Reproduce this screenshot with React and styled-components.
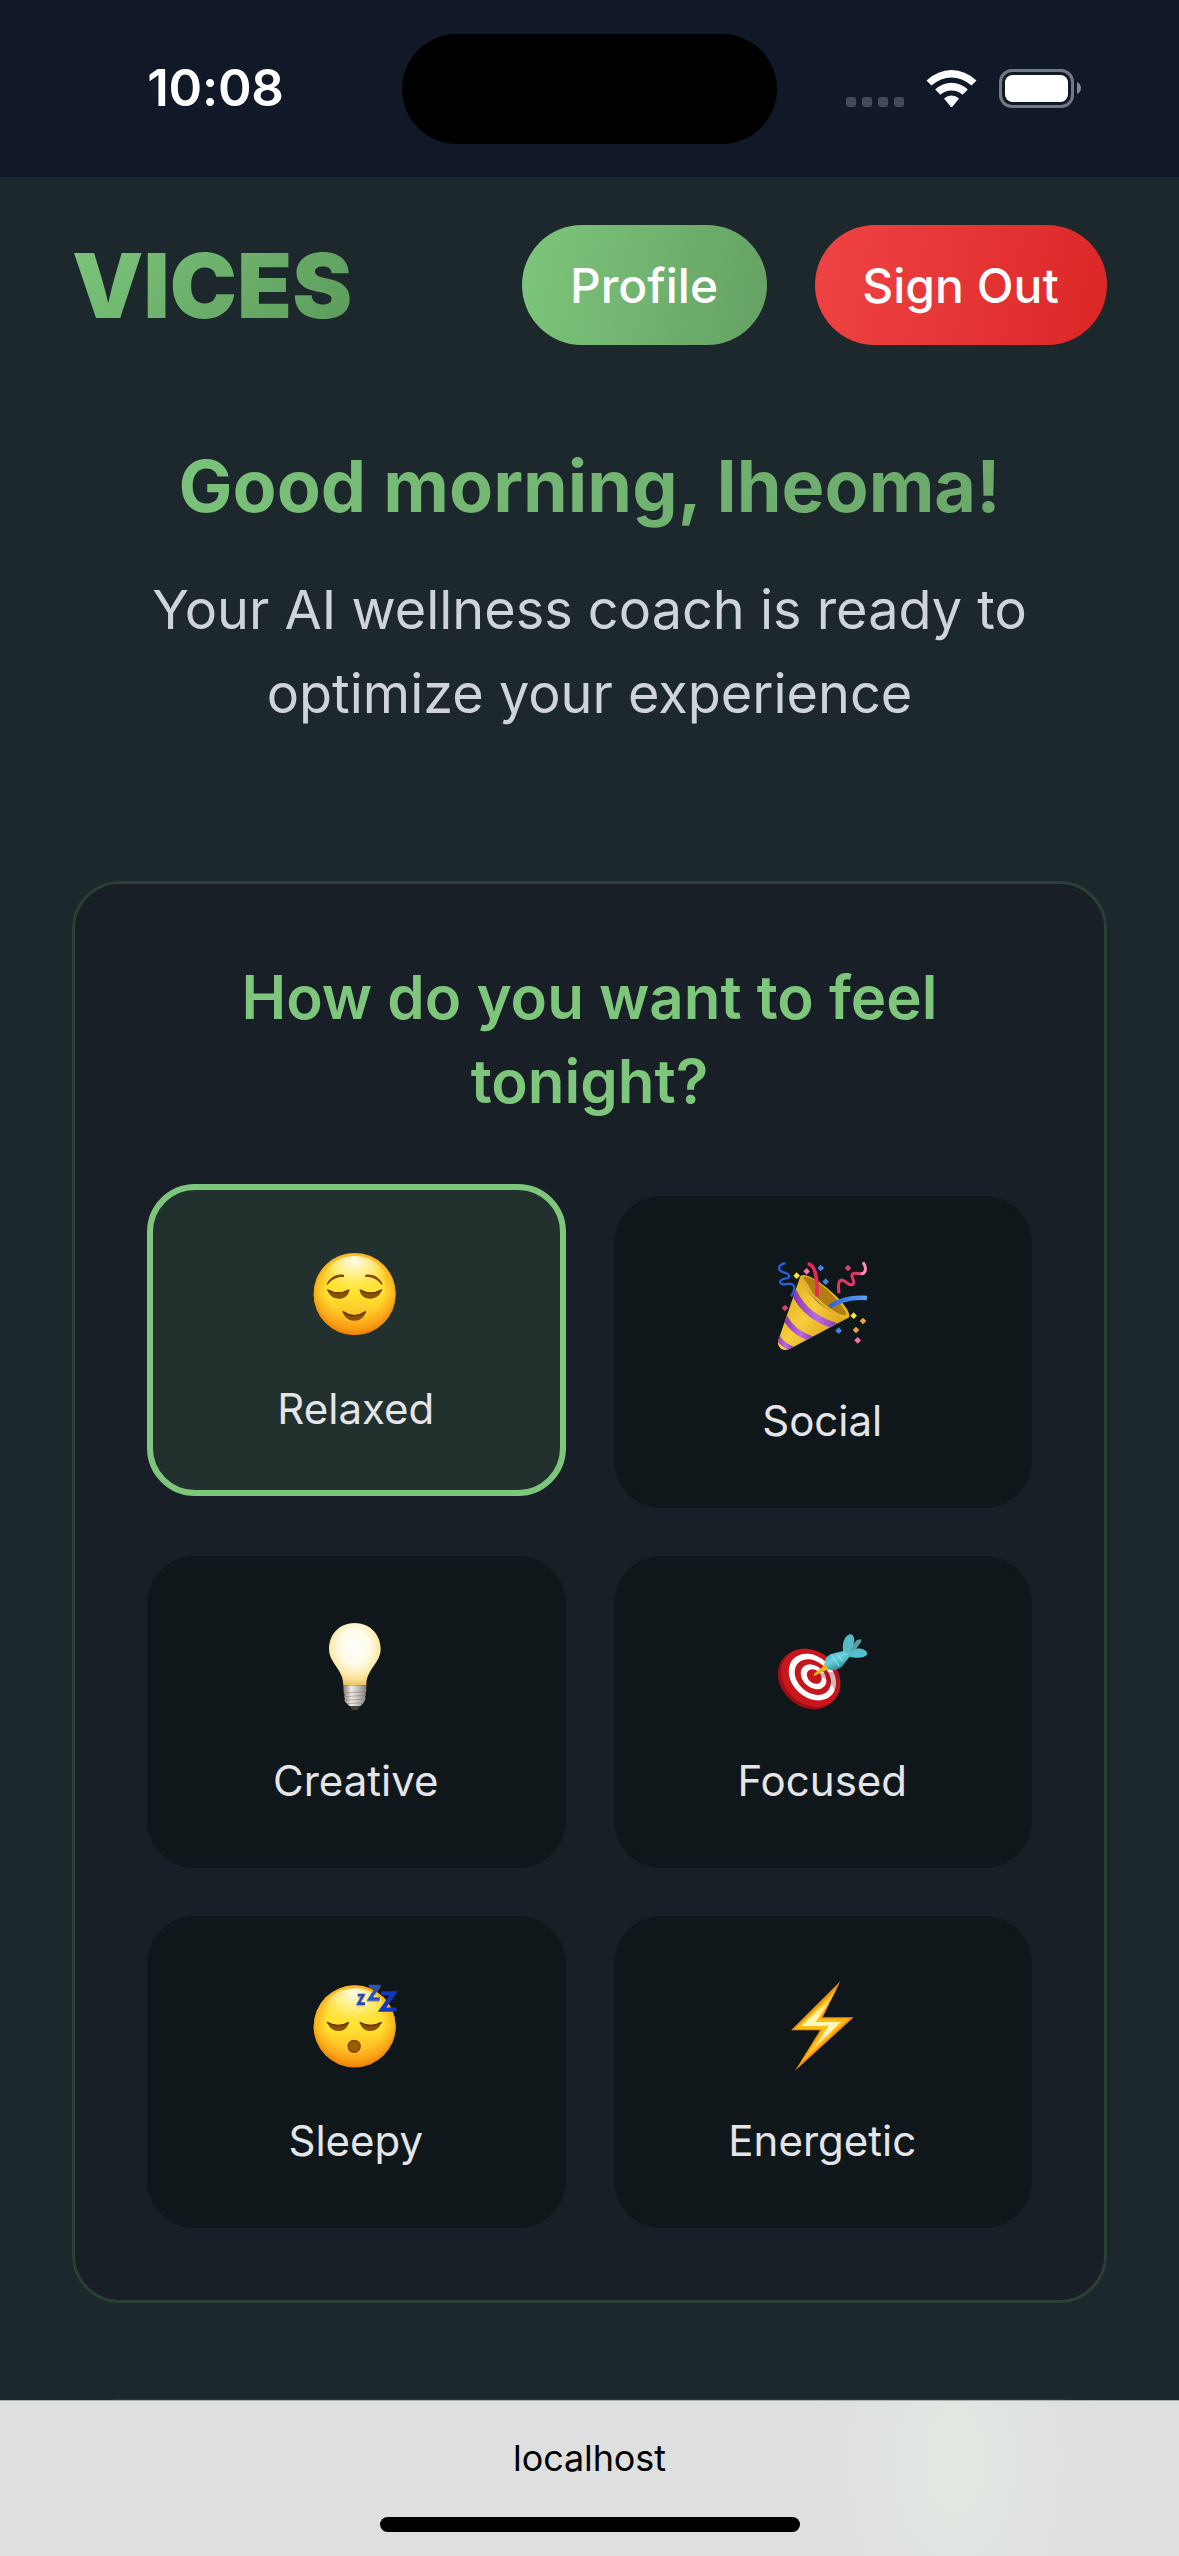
import React from "react";
import styled, { createGlobalStyle } from "styled-components";

const GlobalStyle = createGlobalStyle`
  *, *::before, *::after { box-sizing: border-box; }
  body { margin: 0; background: #1d282d; }
  h1, h2, p { margin: 0; }
  button { font: inherit; border: 0; }
`;

const Screen = styled.div`
  width: 1179px;
  height: 2556px;
  display: flex;
  flex-direction: column;
  overflow: hidden;
  background: #1d282d;
  font-family: Inter, "Liberation Sans", sans-serif;
`;

const StatusBar = styled.header`
  flex: none;
  height: 177px;
  display: grid;
  grid-template-columns: 402px 375px 402px;
  align-items: center;
  background: #111827;
`;

const Clock = styled.time`
  padding: 0 0 1px 29px;
  text-align: center;
  color: #fff;
  font-size: 51px;
  font-weight: 600;
  line-height: 60px;
  letter-spacing: -0.3px;
`;

const Island = styled.div`
  height: 110px;
  border-radius: 55px;
  background: #000;
`;

const StatusIcons = styled.svg`
  display: block;
  width: 240px;
  height: 42px;
  margin-left: 67px;
`;

const Main = styled.main`
  flex: 1;
  min-height: 0;
  overflow: hidden;
  display: flex;
  flex-direction: column;
  padding: 48px 72px 0;
`;

const TopNav = styled.nav`
  flex: none;
  display: flex;
  align-items: center;
  height: 120px;
`;

const Brand = styled.div`
  margin: 2px auto 0 0;
  font-size: 90px;
  font-weight: 900;
  line-height: 108px;
  color: transparent;
  background: linear-gradient(135deg, #7dc67c 0%, #5a9a5a 100%);
  background-clip: text;
  -webkit-background-clip: text;
`;

const NavButtons = styled.div`
  display: flex;
  gap: 48px;
`;

const PillButton = styled.button`
  width: ${(p) => p.$width}px;
  height: 120px;
  padding: 0 1px 0 0;
  border-radius: 60px;
  color: #fff;
  font-size: 48px;
  font-weight: 500;
  background: linear-gradient(100deg, ${(p) => p.$from} 0%, ${(p) => p.$to} 100%);
`;

const Hero = styled.section`
  flex: none;
  margin-top: 98px;
  text-align: center;
`;

const Greeting = styled.h1`
  font-size: 72px;
  font-weight: 700;
  line-height: 86px;
  color: transparent;
  background: linear-gradient(135deg, #7dc67c 0%, #68a468 100%);
  background-clip: text;
  -webkit-background-clip: text;
`;

const Subtitle = styled.p`
  margin-top: 39px;
  color: #d1d3dc;
  font-size: 54px;
  line-height: 84px;
`;

const Panel = styled.section`
  flex: none;
  height: ${(p) => p.$height}px;
  margin-top: ${(p) => p.$gap}px;
  padding: 71px 72px 72px;
  border: 3px solid #294034;
  border-radius: 48px;
  background: #181f26;
`;

const PanelTitle = styled.h2`
  color: #7dc67c;
  font-size: 60px;
  font-weight: 600;
  line-height: 84px;
  text-align: center;
`;

const MoodGrid = styled.div`
  margin-top: 73px;
  display: grid;
  grid-template-columns: 1fr 1fr;
  grid-auto-rows: 312px;
  gap: 48px;
`;

const MoodCard = styled.button`
  display: flex;
  flex-direction: column;
  align-items: center;
  padding: 59px 0 0;
  border: 6px solid ${(p) => (p.$selected ? "#7dc67c" : "#0f171a")};
  border-radius: 48px;
  background: ${(p) => (p.$selected ? "#22302e" : "#0f171a")};
  transform: translateY(${(p) => (p.$selected ? -12 : 0)}px);
`;

const Emoji = styled.svg`
  flex: none;
  display: block;
  width: 90px;
  height: 90px;
  overflow: visible;
`;

const MoodLabel = styled.span`
  margin-top: 39px;
  padding-right: 1px;
  color: #e5e5e9;
  font-size: 42px;
  line-height: 61px;
`;

const BrowserBar = styled.footer`
  flex: none;
  height: 156px;
  display: flex;
  flex-direction: column;
  align-items: center;
  padding-top: 35px;
  border-top: 1px solid #a9b0b0;
  background:
    radial-gradient(ellipse 150px 260px at 955px 60px, #e2e8e2 0%, #e2e8e200 100%),
    #dedfdf;
`;

const Address = styled.span`
  color: #000;
  font-size: 36px;
  line-height: 44px;
  letter-spacing: -0.1px;
`;

const HomeIndicator = styled.div`
  width: 420px;
  height: 15px;
  margin-top: 37px;
  border-radius: 8px;
  background: #000;
`;

function FaceBase({ cy, id }) {
  return (
    <>
      <defs>
        <linearGradient id={id + "-fill"} x1="0" y1="0" x2="0" y2="1">
          <stop offset="0" stopColor="#ffd53a" />
          <stop offset="0.5" stopColor="#ffe432" />
          <stop offset="1" stopColor="#ffa31c" />
        </linearGradient>
        <radialGradient id={id + "-edge"} cx="0.5" cy="0.46" r="0.54">
          <stop offset="0.62" stopColor="#f58a08" stopOpacity="0" />
          <stop offset="0.86" stopColor="#f58a08" stopOpacity="0.45" />
          <stop offset="1" stopColor="#e87a05" stopOpacity="0.9" />
        </radialGradient>
        <radialGradient id={id + "-shine"} cx="0.5" cy="0.1" r="0.62">
          <stop offset="0" stopColor="#fffdf0" stopOpacity="0.98" />
          <stop offset="0.5" stopColor="#fffbb0" stopOpacity="0.6" />
          <stop offset="1" stopColor="#fff34a" stopOpacity="0" />
        </radialGradient>
      </defs>
      <circle cx="195" cy={cy} r="123" fill={`url(#${id}-fill)`} />
      <circle cx="195" cy={cy} r="123" fill={`url(#${id}-edge)`} />
      <ellipse cx="195" cy={cy - 38} rx="96" ry="76" fill={`url(#${id}-shine)`} />
    </>
  );
}

function RelievedFace() {
  return (
    <Emoji viewBox="64 57 270 270">
      <FaceBase cy={192} id="relieved" />
      <g fill="#854705">
        <path d="M111 163 C120 142 141 130 163 135 L163 141 C142 140 127 148 114 164Z" />
        <path d="M279 163 C270 142 249 130 227 135 L227 141 C248 140 263 148 276 164Z" />
      </g>
      <g fill="#8a5203">
        <path d="M113 178 Q146 197 179 179 C177 214 120 217 113 178Z" />
        <path d="M210 179 Q243 197 277 178 C270 216 212 214 210 179Z" />
        <path d="M159 243 Q194 267 229 243 C222 282 166 282 159 243Z" />
      </g>
      <g stroke="#6f3901" strokeWidth="5" strokeLinecap="round" fill="none">
        <path d="M115 181 Q146 198 177 181" />
        <path d="M212 181 Q243 198 275 181" />
        <path d="M161 246 Q194 269 227 246" />
      </g>
    </Emoji>
  );
}

function SleepingFace() {
  return (
    <Emoji viewBox="64 63 270 270">
      <FaceBase cy={199} id="sleeping" />
      <g fill="#8a5203">
        <path d="M112 185 Q146 205 178 185 C173 222 122 222 112 185Z" />
        <path d="M210 185 Q243 205 276 185 C267 222 216 222 210 185Z" />
      </g>
      <g stroke="#6f3901" strokeWidth="5" strokeLinecap="round" fill="none">
        <path d="M114 188 Q146 206 176 188" />
        <path d="M212 188 Q243 206 274 188" />
      </g>
      <circle cx="193.500" cy="259" r="18" fill="#965f05" stroke="#7d4700" strokeWidth="4" />
      <g fill="none" strokeLinejoin="miter" strokeMiterlimit="6">
        <g stroke="#c98a18" strokeOpacity="0.55" transform="translate(0 5)">
          <path d="M205 106 H221 L206 131 H225" strokeWidth="7" />
          <path d="M238 79 H266 L240 117 H268" strokeWidth="9" />
        </g>
        <path d="M204 105 H221 L206 131 H226" stroke="#2248bd" strokeWidth="8" />
        <path d="M237 79 H265 L240 117 H270" stroke="#2453cc" strokeWidth="10" />
        <path d="M274 100 H312 L277 149 H320" stroke="#1238c0" strokeWidth="13" />
      </g>
    </Emoji>
  );
}

function PartyPopper() {
  return (
    <Emoji viewBox="83 63 270 270">
      <defs>
        <linearGradient id="cone" x1="0" y1="0" x2="1" y2="0.8">
          <stop offset="0" stopColor="#d9a010" />
          <stop offset="0.5" stopColor="#f7cd3e" />
          <stop offset="1" stopColor="#d09a0b" />
        </linearGradient>
        <linearGradient id="violet" x1="0" y1="0" x2="1" y2="0">
          <stop offset="0" stopColor="#8c37b0" />
          <stop offset="0.5" stopColor="#ba6be6" />
          <stop offset="1" stopColor="#8735a6" />
        </linearGradient>
        <linearGradient id="blueRibbon" x1="0" y1="0" x2="1" y2="0">
          <stop offset="0" stopColor="#2b63d4" />
          <stop offset="1" stopColor="#5aa2fa" />
        </linearGradient>
        <clipPath id="coneClip">
          <path d="M149 112 C166 160 230 225 294 233 L122 325 Q106 334 92 326 Q80 317 84 301Z" />
        </clipPath>
      </defs>
      <path d="M149 112 C166 160 230 225 294 233 L122 325 Q106 334 92 326 Q80 317 84 301Z" fill="url(#cone)" />
      <g clipPath="url(#coneClip)" fill="none" stroke="url(#violet)">
        <path d="M130 155 Q168 237 270 262" strokeWidth="19" />
        <path d="M104 232 Q130 283 196 300" strokeWidth="17" />
        <path d="M80 288 Q96 316 130 329" strokeWidth="16" />
      </g>
      <path d="M151 107 C169 96 216 128 258 169 C286 197 302 223 296 232 C282 246 230 213 190 173 C158 143 143 116 151 107Z" fill="#e6b328" />
      <path d="M160 111 C180 106 222 139 249 168 C277 198 291 219 287 224 C276 231 231 203 198 170 C170 142 151 118 160 111Z" fill="#b07d10" />
      <path d="M158 113 C182 139 187 166 200 181 C177 160 154 132 158 113Z" fill="#e0b02c" />
      <path d="M172 72 C194 72 202 112 200 169" fill="none" stroke="#e72957" strokeWidth="11" />
      <path d="M238 200 Q284 169 350 174" fill="none" stroke="url(#blueRibbon)" strokeWidth="13" />
      <path d="M105 69 C82 75 80 92 100 97 C118 101 123 113 108 115 C81 118 84 137 112 132 C139 128 135 151 122 169" fill="none" stroke="#265fd9" strokeWidth="7" />
      <path d="M338 67 C351 84 345 103 331 101 C315 98 299 98 307 115 C316 137 302 139 288 127 C269 113 261 120 266 160" fill="none" stroke="#e43767" strokeWidth="9" />
      <path d="M338 67 C351 84 345 103 331 101" fill="none" stroke="#f794b3" strokeWidth="8" />
      <path d="M169 84 l10 10 -10 10 -10 -10z M322 291 l10 10 -10 10 -10 -10z" fill="#f477a5" />
      <path d="M293 74 l10 10 -10 10 -10 -10z M104 194 l10 10 -10 10 -10 -10z" fill="#da426a" />
      <path d="M211 74 l11 10 -11 10 -10 -10z M226 115 l10 10 -10 10 -10 -10z M265 262 l10 10 -10 10 -10 -10z" fill="#3d83ea" />
      <path d="M139 97 l10 10 -10 10 -10 -10z M310 217 l10 10 -10 10 -10 -10z" fill="#f4e43f" />
      <path d="M338 233 l10 10 -10 10 -10 -10z M317 260 l10 10 -10 10 -10 -10z" fill="#f0a23e" />
    </Emoji>
  );
}

function LightBulb() {
  return (
    <Emoji viewBox="34 63 270 270">
      <defs>
        <radialGradient id="glass" cx="0.5" cy="0.38" r="0.62">
          <stop offset="0" stopColor="#ffffff" />
          <stop offset="0.45" stopColor="#fffcea" />
          <stop offset="0.8" stopColor="#fbe6a2" />
          <stop offset="1" stopColor="#edc766" />
        </radialGradient>
        <linearGradient id="metal" x1="0" y1="0" x2="1" y2="0">
          <stop offset="0" stopColor="#8a867f" />
          <stop offset="0.35" stopColor="#eeeae3" />
          <stop offset="0.65" stopColor="#c2beb8" />
          <stop offset="1" stopColor="#85817b" />
        </linearGradient>
      </defs>
      <path d="M165 69 C210 69 243 103 243 147 C243 190 199 208 200 256 H131 C132 208 88 190 88 147 C88 103 120 69 165 69Z" fill="url(#glass)" />
      <path d="M149 315 H182 L174 330 H157Z" fill="#42403e" />
      <path d="M131 256 H200 V274 L197 279 L199 284 L196 290 L198 296 L195 302 L192 308 L182 318 H149 L139 308 L134 302 L136 296 L133 290 L135 284 L132 279 Z" fill="url(#metal)" />
      <g stroke="#77736d" strokeWidth="3" opacity="0.5">
        <path d="M133 279 L198 275 M134 290 L197 286 M136 301 L196 297 M142 311 L189 308" />
      </g>
    </Emoji>
  );
}

function DartTarget() {
  return (
    <Emoji viewBox="83 33 270 270">
      <defs>
        <linearGradient id="dart" x1="0" y1="0" x2="0.6" y2="1">
          <stop offset="0" stopColor="#3ba7b8" />
          <stop offset="0.5" stopColor="#6ad2df" />
          <stop offset="1" stopColor="#238594" />
        </linearGradient>
      </defs>
      <g transform="rotate(43 180 205)">
        <ellipse cx="177" cy="213" rx="98" ry="80" fill="#9f0d14" />
        <ellipse cx="180" cy="203" rx="97" ry="79" fill="#c9161d" />
        <ellipse cx="182" cy="198" rx="79" ry="61" fill="#fff" />
        <ellipse cx="183" cy="197" rx="61" ry="46" fill="#c9161d" />
        <ellipse cx="184" cy="195" rx="43" ry="32" fill="#fff" />
        <ellipse cx="185" cy="193" rx="25" ry="19" fill="#c9161d" />
      </g>
      <path d="M193 193 L233 187 L262 184 C268 204 266 229 254 246 C249 224 232 206 193 193Z" fill="#6d1017" opacity="0.3" />
      <path d="M190 192 L217 171 L224 156 L243 178 L226 181 L192 198Z" fill="#e9b90a" />
      <path d="M280 134 L319 91 Q337 82 332 96 L306 132Z" fill="#5b9ba2" />
      <path d="M225 149 Q228 138 244 131 L288 121 L301 136 L276 169 Q259 183 239 180 Q221 168 225 149Z" fill="url(#dart)" />
      <path d="M278 123 C274 91 288 72 303 73 C317 79 313 105 297 132Z" fill="#55bac6" />
      <path d="M292 133 L316 116 C336 113 352 121 350 133 C342 147 310 145 291 139Z" fill="#50c0cd" />
      <path d="M243 135 L266 168 M259 130 L277 155" stroke="#a0e7ec" strokeWidth="4" opacity="0.65" />
    </Emoji>
  );
}

function Lightning() {
  return (
    <Emoji viewBox="55 63 270 270">
      <defs>
        <linearGradient id="boltCore" x1="0" y1="0" x2="0" y2="1">
          <stop offset="0" stopColor="#ffc629" />
          <stop offset="0.35" stopColor="#fff6ae" />
          <stop offset="0.6" stopColor="#fff9c8" />
          <stop offset="1" stopColor="#ffb51c" />
        </linearGradient>
      </defs>
      <path d="M242 64 L94 211 H181 L106 332 L282 172 H189Z" fill="#f79009" />
      <path d="M231 86 L105 207 H190 L124 308 L268 176 H181Z" fill="#ffbd14" />
      <path d="M222 104 L124 198 H207 L146 284 L243 186 H168Z" fill="url(#boltCore)" />
    </Emoji>
  );
}

const moods = [
  { label: "Relaxed", Icon: RelievedFace, selected: true },
  { label: "Social", Icon: PartyPopper },
  { label: "Creative", Icon: LightBulb },
  { label: "Focused", Icon: DartTarget },
  { label: "Sleepy", Icon: SleepingFace },
  { label: "Energetic", Icon: Lightning },
];

function DeviceIcons() {
  return (
    <StatusIcons viewBox="844 67 240 42">
      <g fill="#464a57">
        {[846, 862, 878, 894].map((x) => (
          <rect key={x} x={x} y="96" width="10" height="10" rx="3" />
        ))}
      </g>
      <g fill="#fff">
        <path d="M926.500 79.500 Q938 69 951.500 69 Q965 69 976.500 79.500 L971.500 84.500 Q962 76.500 951.500 76.500 Q941 76.500 931.500 84.500Z" />
        <path d="M935.200 88.500 Q942.500 81.700 951.500 81.700 Q960.500 81.700 967.800 88.500 L962.600 93.700 Q957.500 89.500 951.500 89.500 Q945.500 89.500 940.400 93.700Z" />
        <path d="M944 97.500 Q947.500 94.600 951.500 94.600 Q955.500 94.600 959 97.500 L952.500 105.500 Q951.500 106.500 950.500 105.500Z" />
      </g>
      <rect x="1000.500" y="69.500" width="72" height="36" rx="11.500" fill="none" stroke="#747883" strokeWidth="3" />
      <rect x="1005" y="74" width="63" height="27" rx="7.500" fill="#fff" />
      <path d="M1077 81 Q1081 83 1081 87 Q1081 91 1077 93Z" fill="#858891" />
    </StatusIcons>
  );
}

export default function App() {
  return (
    <Screen>
      <GlobalStyle />
      <StatusBar>
        <Clock>10:08</Clock>
        <Island />
        <DeviceIcons />
      </StatusBar>
      <Main>
        <TopNav>
          <Brand>VICES</Brand>
          <NavButtons>
            <PillButton $width={245} $from="#7dc67c" $to="#65a163">Profile</PillButton>
            <PillButton $width={292} $from="#ef4444" $to="#dc2626">Sign Out</PillButton>
          </NavButtons>
        </TopNav>
        <Hero>
          <Greeting>Good morning, Iheoma!</Greeting>
          <Subtitle>
            Your AI wellness coach is ready to
            <br />
            optimize your experience
          </Subtitle>
        </Hero>
        <Panel $height={1422} $gap={145}>
          <PanelTitle>
            How do you want to feel
            <br />
            tonight?
          </PanelTitle>
          <MoodGrid>
            {moods.map(({ label, Icon, selected }) => (
              <MoodCard key={label} $selected={selected}>
                <Icon />
                <MoodLabel>{label}</MoodLabel>
              </MoodCard>
            ))}
          </MoodGrid>
        </Panel>
        <Panel $height={600} $gap={96} />
      </Main>
      <BrowserBar>
        <Address>localhost</Address>
        <HomeIndicator />
      </BrowserBar>
    </Screen>
  );
}
